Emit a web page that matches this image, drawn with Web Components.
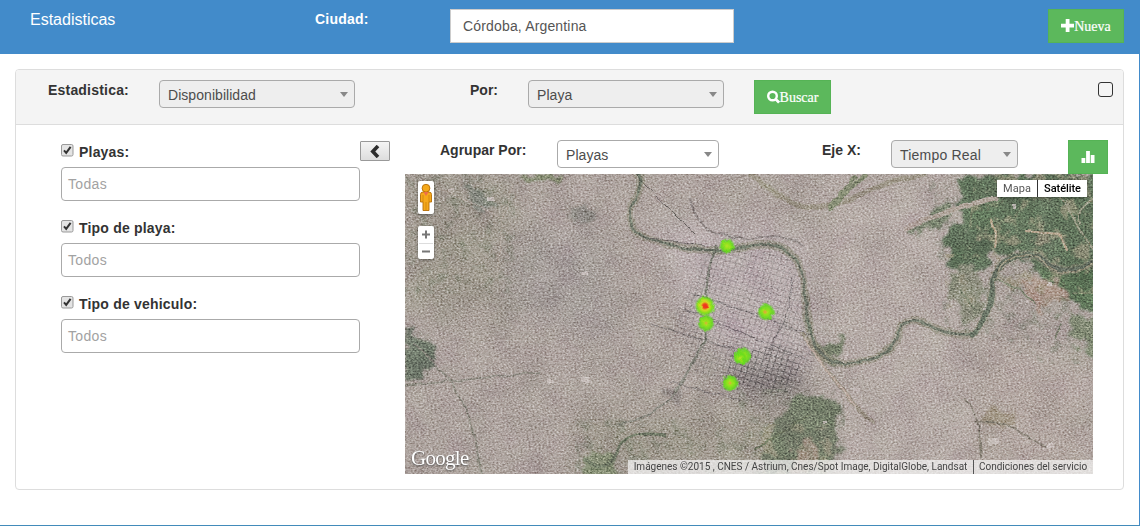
<!DOCTYPE html>
<html lang="es">
<head>
<meta charset="utf-8">
<title>Estadisticas</title>
<style>
body{margin:0;background:#fff;font-family:"Liberation Sans",Arial,sans-serif;font-size:14px;color:#333;line-height:20px}
</style>
</head>
<body>
<stats-page></stats-page>
<script>
const define = (name, html) => {
  const t = document.createElement('template');
  t.innerHTML = html;
  customElements.define(name, class extends HTMLElement {
    constructor(){
      super();
      this.attachShadow({mode:'open'}).appendChild(t.content.cloneNode(true));
    }
  });
};

define('field-label', `<style>
:host{display:block;font-weight:700;line-height:20px;white-space:nowrap;letter-spacing:var(--track,.2px)}
</style><slot></slot>`);

define('drop-down', `<style>
:host{display:flex;align-items:center;justify-content:space-between;box-sizing:border-box;height:28px;border:1px solid #aaa;border-radius:4px;background:var(--fill,#eee);padding:2px 6px 0 8px;color:#4c4c4c;white-space:nowrap;letter-spacing:.05px}
i{width:0;height:0;border:4px solid transparent;border-top:5px solid #888;border-bottom:0;margin-top:-2px}
</style><span><slot></slot></span><i></i>`);

define('green-button', `<style>
:host{display:flex;align-items:center;justify-content:center;box-sizing:border-box;height:34px;background:#5cb85c;border:1px solid #55b355;color:#fff;font-family:"Liberation Serif",serif;white-space:nowrap;line-height:20px;-webkit-text-stroke:.2px #fff}
span{padding-top:1px}
::slotted(svg){display:block}
</style><slot name="icon"></slot><span><slot></slot></span>`);

define('text-box', `<style>
:host{display:flex;align-items:center;box-sizing:border-box;height:34px;border:1px solid #aaa;border-radius:4px;background:#fff;padding:0 6px;color:#a2a2a2;letter-spacing:.35px}
</style><slot></slot>`);

define('filter-field', `<style>
:host{display:block;height:76px}
.row{display:flex;gap:5px;height:25px}
svg{display:block;margin-top:2px}
</style>
<div class="row">
<svg width="13" height="13" viewBox="0 0 13 13"><rect x=".5" y=".5" width="11.5" height="11.5" rx="1.5" fill="#e4e4e4" stroke="#999"/><path d="M3 6.3 5.2 8.8 9.6 2.8" fill="none" stroke="#333" stroke-width="2"/></svg>
<field-label><slot name="label"></slot></field-label></div>
<text-box><slot></slot></text-box>`);

define('top-bar', `<style>
:host{display:grid;grid-template-columns:285px 135px 284px 1fr auto;box-sizing:border-box;height:54px;background:#428bca;color:#fff;padding:9px 16px 0 30px;align-items:start}
.title{font-size:16px;margin-top:1px}
.city{box-sizing:border-box;height:34px;border:1px solid #ccc;background:#fff;color:#555;padding:6px 12px;letter-spacing:.16px}
green-button{grid-column:5;width:76px}
</style>
<span class="title">Estadisticas</span>
<field-label>Ciudad:</field-label>
<div class="city">Córdoba, Argentina</div>
<green-button><svg slot="icon" width="13" height="14" viewBox="0 0 13 14"><path d="M4.700 0h3.800v4.800H13v3.700H8.500V13H4.700V8.500H0V4.800h4.700z" fill="#fff"/></svg>Nueva</green-button>`);

define('map-controls', `<style>
:host{position:absolute;left:13px;top:7px;display:flex;flex-direction:column;gap:12px}
div{width:16px;height:33px;background:#fff;border-radius:2px;box-shadow:0 1px 3px #0006}
svg{display:block}
</style>
<div><svg width="16" height="33" viewBox="0 0 16 33"><g fill="#f5a91b" stroke="#b56d05" stroke-width=".9"><path d="M2.500 13.500q0-2.500 2.500-2.500h6q2.500 0 2.500 2.500v7.500h-2.500v8.500H5V21H2.500z"/><circle cx="8" cy="7.200" r="3.900"/></g><path d="M5.500 11h5L8 15z" fill="#ec6d4b"/><path d="M8 21v8M5 14v7M11 14v7" stroke="#c67c08" stroke-width=".7"/></svg></div>
<div><svg width="16" height="33" viewBox="0 0 16 33"><path d="M4 8.500h8M8 4.500v8M4 25.500h8" stroke="#777" stroke-width="2"/><path d="M1 17.500h14" stroke="#ddd"/></svg></div>`);

define('satellite-map', `<style>
:host{display:block;position:relative;width:688px;height:300px;overflow:hidden;background:#a1958f;font-family:Roboto,sans-serif}
svg.sat{display:block}
.types{position:absolute;right:6px;top:6px;display:flex;height:17px;background:#fff;font-size:11px;line-height:17px;box-shadow:0 1px 3px #0006;color:#565656;letter-spacing:.05px}
.types span{width:40px;text-align:center}
.types b{width:49px;border-left:1px solid #333;font-weight:500;color:#000;text-align:center;letter-spacing:-.05px}
.logo{position:absolute;left:6px;bottom:3px;color:#fff;font:21px/26px "Liberation Serif",serif;letter-spacing:-.7px;text-shadow:0 1px 2px #444}
.credit{position:absolute;right:0;bottom:0;display:flex;height:14px;font-size:10px;line-height:14px;color:#444;background:#f5f5f5b8;white-space:nowrap}
.credit span{width:345px;text-align:center}
.credit em{width:120px;box-sizing:border-box;border-left:1px solid #555;font-style:normal;padding-left:5px}
</style>
<svg class="sat" width="688" height="300" viewBox="0 0 688 300">
<defs>
<filter id="grain" x="0" y="0" width="100%" height="100%" color-interpolation-filters="sRGB"><feTurbulence type="fractalNoise" baseFrequency=".5 .62" numOctaves="3" seed="7"/><feColorMatrix values="1.2 .6 0 0 -.36  1.2 .6 0 0 -.36  1.2 .6 0 0 -.36  0 0 0 0 1"/></filter>
<filter id="mottle" x="0" y="0" width="100%" height="100%" color-interpolation-filters="sRGB"><feTurbulence type="fractalNoise" baseFrequency=".035" numOctaves="4" seed="21"/><feColorMatrix values=".8 0 .2 0 0  .9 .1 0 0 0  .7 0 .2 0 .06  0 0 0 0 1"/></filter>
<filter id="rough" x="-20%" y="-20%" width="140%" height="140%"><feTurbulence type="fractalNoise" baseFrequency=".07" numOctaves="4" seed="4"/><feDisplacementMap in="SourceGraphic" scale="26" xChannelSelector="R" yChannelSelector="G"/><feGaussianBlur stdDeviation="1.3"/></filter>
<filter id="scatter" x="0" y="0" width="100%" height="100%" color-interpolation-filters="sRGB"><feTurbulence type="fractalNoise" baseFrequency=".09" numOctaves="4" seed="12" result="n"/><feColorMatrix in="n" values="0 0 0 0 .33  0 0 0 0 .39  0 0 0 0 .3  4 0 0 0 -2.05" result="g"/><feComposite in="g" in2="SourceAlpha" operator="in"/></filter>
<filter id="sand" x="0" y="0" width="100%" height="100%" color-interpolation-filters="sRGB"><feTurbulence type="fractalNoise" baseFrequency=".07" numOctaves="4" seed="33" result="n"/><feColorMatrix in="n" values="0 0 0 0 .62  0 0 0 0 .59  0 0 0 0 .49  6 0 0 0 -3.15" result="g"/><feComposite in="g" in2="SourceAlpha" operator="in"/></filter>
<filter id="wave" x="-5%" y="-5%" width="110%" height="110%"><feTurbulence type="fractalNoise" baseFrequency=".08" numOctaves="2" seed="2"/><feDisplacementMap in="SourceGraphic" scale="5" xChannelSelector="R" yChannelSelector="G"/><feGaussianBlur stdDeviation=".6"/></filter>
<filter id="soft" x="-30%" y="-30%" width="160%" height="160%"><feGaussianBlur stdDeviation="14"/></filter>
<filter id="spot" x="-20%" y="-20%" width="140%" height="140%"><feTurbulence type="fractalNoise" baseFrequency=".25" numOctaves="1" seed="3"/><feDisplacementMap in="SourceGraphic" scale="4"/></filter>
<pattern id="blocks" width="6" height="6" patternUnits="userSpaceOnUse" patternTransform="rotate(17)"><path d="M0 .5h6M.5 0v6" stroke="#3f3b3d" stroke-width=".8" opacity=".5"/></pattern>
<pattern id="streets" width="5" height="4" patternUnits="userSpaceOnUse" patternTransform="rotate(-12)"><path d="M0 .5h5M.5 0v4" stroke="#5c5552" stroke-width=".6" opacity=".2"/></pattern>
<radialGradient id="heat"><stop offset="0" stop-color="#b5e12a"/><stop offset=".35" stop-color="#8fe21c"/><stop offset=".7" stop-color="#65dc1b" stop-opacity=".9"/><stop offset="1" stop-color="#5bd51d" stop-opacity="0"/></radialGradient>
<radialGradient id="hot"><stop offset="0" stop-color="#ef301c"/><stop offset=".2" stop-color="#ee4420"/><stop offset=".4" stop-color="#d5d825"/><stop offset=".7" stop-color="#7de01c"/><stop offset="1" stop-color="#5bd51d" stop-opacity="0"/></radialGradient>
</defs>
<rect width="688" height="300" fill="#aca19c"/>
<g filter="url(#soft)">
<path d="M250 40 400 60 410 180 380 220 280 150z" fill="#beb1b3"/>
<path d="M415 0 560 0 560 300 430 300z" fill="#b6aaa6"/>
<path d="M0 0h110v140H0z" fill="#9e978b"/>
<path d="M110 60 200 60 210 170 100 130z" fill="#a29a97"/>
<path d="M320 190 395 190 390 225 335 225z" fill="#77716f"/>
<path d="M170 235 400 235 400 300 170 300z" fill="#9f988b"/>
<path d="M580 160 688 190V300H560z" fill="#b3a6a0"/>
</g>
<rect width="688" height="300" fill="url(#streets)"/>
<path d="M305 75 385 78 398 110 408 195 384 226 325 204 290 200 270 140z" fill="url(#blocks)" opacity=".55"/>
<path d="M325 180 375 170 395 192 382 220 320 207z" fill="url(#blocks)"/>
<g filter="url(#rough)">
<path d="M550 8 600 0H700V100L650 98 615 84 590 78 575 98 553 100 545 78 535 68 560 48z" fill="#536850"/>
<path d="M505 52 545 30 555 36 515 62z" fill="#727d67"/>
<path d="M635 93 700 96V138L650 122z" fill="#506a4c"/>
<path d="M658 138 700 148V188L668 168z" fill="#7b876e"/>
<path d="M545 98 570 93 578 138 565 153 545 128z" fill="#888a78"/>
<path d="M615 100 650 103 660 123 635 138z" fill="#a99285"/>
<path d="M388 215 420 215 430 260 412 292 345 296 350 262 365 240z" fill="#69735f" transform="translate(8 7)"/>
<path d="M410 170 436 168 436 186 416 190z" fill="#6b765f"/>
<path d="M0 158 26 160 32 184 18 204 0 204z" fill="#667162"/>
<path d="M58 14 86 18 92 36 63 34z" fill="#80867a"/>
<path d="M160 28 180 25 185 42 165 46z" fill="#8b8882" transform="translate(7 6)"/>
<path d="M114 0 156 0 148 9 120 8z" fill="#788265"/>
<path d="M178 285 203 275 213 305H178z" fill="#7c856b"/>
<path d="M250 205 270 208 268 225 252 225z" fill="#87807b" transform="translate(8 7)"/>
<path d="M388 275 408 265 416 296 386 300z" fill="#9b8b7b"/>
<path d="M576 232 606 235 606 252 578 252z" fill="#9a8c7b"/>
</g>
<g filter="url(#scatter)" opacity=".3"><path d="M0 0H110V120H0zM330 215H440V300H330zM170 245H340V300H170zM520 0H688V190H640L540 150z"/></g>
<g filter="url(#sand)" opacity=".6"><path d="M570 0H688V120H600L560 90zM340 250H430V300H340zM540 80H570V140H540z"/></g>
<g fill="none" filter="url(#wave)" stroke-linecap="round" stroke-linejoin="round">
<path d="M234 0C240 20 222 28 225 44 228 62 245 66 260 70 292 78 325 78 345 72 375 67 388 78 395 92 402 112 398 140 408 168 415 185 430 192 450 189 475 182 487 178 492 165L496 152Q505 142 520 149 545 163 567 160 585 145 588 110 590 88 612 82 632 77 642 90 660 104 688 88" stroke="#85846f" stroke-width="8" opacity=".6"/>
<path d="M234 0C240 20 222 28 225 44 228 62 245 66 260 70 292 78 325 78 345 72 375 67 388 78 395 92 402 112 398 140 408 168 415 185 430 192 450 189 475 182 487 178 492 165L496 152Q505 142 520 149 545 163 567 160" stroke="#656e60" stroke-width="2.600"/>
<path d="M567 160Q585 145 588 110 590 88 612 82 632 77 642 90 660 104 688 88" stroke="#586456" stroke-width="5"/>
<path d="M592 100Q594 88 612 82 632 77 642 92 660 106 688 90" stroke="#958f77" stroke-width="1.500"/>
<path d="M345 0C365 15 382 31 405 34 448 33 455 12 520 0" stroke="#8c8670" stroke-width="5" opacity=".65"/>
<path d="M425 33 450 3M460 0 425 35" stroke="#7c8569" stroke-width="4"/>
<path d="M285 25C292 55 310 64 350 65Q380 57 398 72" stroke="#8a8180" stroke-width="2"/>
<path d="M312 72Q300 95 302 132 306 165 290 183 280 205 266 225 250 240 215 250" stroke="#717469" stroke-width="2.300" opacity=".8"/>
<path d="M10 170C40 200 55 215 65 245L77 300M0 212 135 198" stroke="#7f7d73" stroke-width="1.700"/>
<path d="M180 285Q205 305 215 270 230 255 260 262" stroke="#66705c" stroke-width="3"/>
<path d="M388 104 382 140 360 185M290 120 405 160M280 135 400 185M245 150 330 175M265 208 335 226" stroke="#575255" stroke-width="1.200" opacity=".6"/>
<path d="M398 160Q420 196 430 205L450 232 468 248" stroke="#8b8270" stroke-width="4" opacity=".8"/>
<path d="M400 165Q420 198 430 205L450 232" stroke="#c0aea3" stroke-width="1.800"/>
<path d="M405 240 350 275" stroke="#606a52" stroke-width="2"/>
<path d="M560 225Q572 240 574 255L576 284M570 248Q600 246 615 258L640 272" stroke="#7b7469" stroke-width="1.700"/>
<path d="M500 54 555 33 590 24" stroke="#aca096" stroke-width="5"/>
<path d="M660 25Q675 60 688 75M654 22 670 45M688 25Q670 35 675 50" stroke="#9a9a83" stroke-width="1.800"/>
<path d="M620 57 655 60 662 76M585 46 592 60 590 72" stroke="#b9a58b" stroke-width="2.200"/>
<path d="M590 105 615 115 630 130M555 115 570 135M655 150 650 165" stroke="#727a65" stroke-width="1.700"/>
<path d="M35 15 65 28M92 105 98 45 108 10M60 25 95 43" stroke="#b4a89e" stroke-width="1.300" opacity=".7"/>
<path d="M240 10 290 60M245 65 300 72" stroke="#66615f" stroke-width="1"/>
</g>
<g fill="#d0c6c3" filter="url(#wave)" opacity=".8"><path d="M82 23h7v4h-7zM42 15h6v2h-6zM177 98h6v3h-6zM176 203h9v5h-9zM607 30h4v4h-4zM642 108h5v4h-5zM578 133h4v3h-4zM642 268h6v6h-6zM583 264h10v6h-10zM449 214h6v3h-6zM439 181h3v4h-3zM620 126h3v3h-3zM275 286h4v4h-4zM418 246h4v3h-4zM142 206h6v3h-6z"/></g>
<rect width="688" height="300" fill="#b9aaa5" opacity=".12"/>
<rect width="688" height="300" filter="url(#mottle)" style="mix-blend-mode:soft-light" opacity=".3"/>
<rect width="688" height="300" filter="url(#grain)" style="mix-blend-mode:overlay" opacity=".48"/>
<g filter="url(#spot)"><circle cx="322" cy="72" r="8" fill="url(#heat)"/><circle cx="301" cy="149" r="9" fill="url(#heat)"/><circle cx="300" cy="132" r="10.500" fill="url(#hot)"/><circle cx="361" cy="138" r="9" fill="url(#heat)"/><circle cx="338" cy="182" r="9" fill="url(#heat)"/><circle cx="335" cy="184" r="7" fill="url(#heat)"/><circle cx="325" cy="209" r="9" fill="url(#heat)"/></g>
<g fill="#e1a53a"><circle cx="360" cy="138" r="1.800" opacity=".8"/><circle cx="301" cy="149" r="1.500" opacity=".6"/><circle cx="325" cy="209" r="1.500" opacity=".6"/></g>
</svg>
<map-controls></map-controls>
<div class="types"><span>Mapa</span><b>Satélite</b></div>
<div class="logo">Google</div>
<div class="credit"><span>Imágenes ©2015 , CNES / Astrium, Cnes/Spot Image, DigitalGlobe, Landsat</span><em>Condiciones del servicio</em></div>`);

define('query-bar', `<style>
:host{display:grid;grid-template-columns:111px 196px 115px 58px 196px 30px 77px 1fr 15px;box-sizing:border-box;height:55px;padding:10px 10px 0 32px;background:#f4f4f4;border-bottom:1px solid #ddd;border-radius:3px 3px 0 0;align-items:start}
.por{grid-column:4;--track:0}.by{grid-column:5}green-button{grid-column:7}
.box{grid-column:9;box-sizing:border-box;width:15px;height:15px;border:1px solid #333;border-radius:3px;margin-top:2px}
</style>
<field-label>Estadistica:</field-label><drop-down>Disponibilidad</drop-down>
<field-label class="por">Por:</field-label><drop-down class="by">Playa</drop-down>
<green-button><svg slot="icon" width="13" height="14" viewBox="0 0 13 14"><circle cx="5.500" cy="6" r="4.300" fill="none" stroke="#fff" stroke-width="2.400"/><path d="m8.500 9 3.600 3.600" stroke="#fff" stroke-width="2.800"/></svg>Buscar</green-button><span class="box"></span>`);

define('filter-list', `<style>
:host{display:block;width:299px;padding-top:2px}
</style>
<filter-field><span slot="label">Playas:</span>Todas</filter-field>
<filter-field><span slot="label">Tipo de playa:</span>Todos</filter-field>
<filter-field><span slot="label">Tipo de vehiculo:</span>Todos</filter-field>`);

define('collapse-button', `<style>
:host{display:flex;align-items:center;justify-content:center;box-sizing:border-box;width:30px;height:20px;margin-top:1px;border:1px solid #999;border-radius:1px;background:linear-gradient(#f5f5f5,#ddd)}
</style><svg width="10" height="13" viewBox="0 0 10 13"><path d="M8 1 2.800 6.500 8 12" fill="none" stroke="#2d2d2d" stroke-width="3.600"/></svg>`);

define('chart-panel', `<style>
:host{display:block;margin-left:15px;width:703px}
.tools{display:grid;grid-template-columns:117px 162px 103px 69px 127px 50px 40px;padding-left:35px;height:34px;align-items:start;--track:0}
.plain{--fill:#fff}
.eje{grid-column:4}.time{grid-column:5;letter-spacing:.2px}green-button{grid-column:7}
</style>
<div class="tools"><field-label>Agrupar Por:</field-label><drop-down class="plain">Playas</drop-down>
<field-label class="eje">Eje X:</field-label><drop-down class="time">Tiempo Real</drop-down>
<green-button><svg slot="icon" width="14" height="14" viewBox="0 0 14 14"><path d="M.5 8h3.800v5H.5zM5.100 1h3.800v12H5.100zM9.700 5h3.800v8H9.700z" fill="#fff"/></svg></green-button></div>
<satellite-map></satellite-map>`);

define('stats-page', `<style>
:host{display:flex;flex-direction:column;box-sizing:border-box;width:1140px;height:526px;border-bottom:1px solid #428bba}
main{flex:1;border-right:1px solid #428bca;padding:15px 15px 0}
.card{box-sizing:border-box;height:421px;border:1px solid #ddd;border-radius:4px}
.body{display:flex;align-items:flex-start;padding:15px 0 0 45px}
</style>
<top-bar></top-bar>
<main><section class="card"><query-bar></query-bar>
<div class="body"><filter-list></filter-list><collapse-button></collapse-button><chart-panel></chart-panel></div></section></main>`);
</script>
</body>
</html>
